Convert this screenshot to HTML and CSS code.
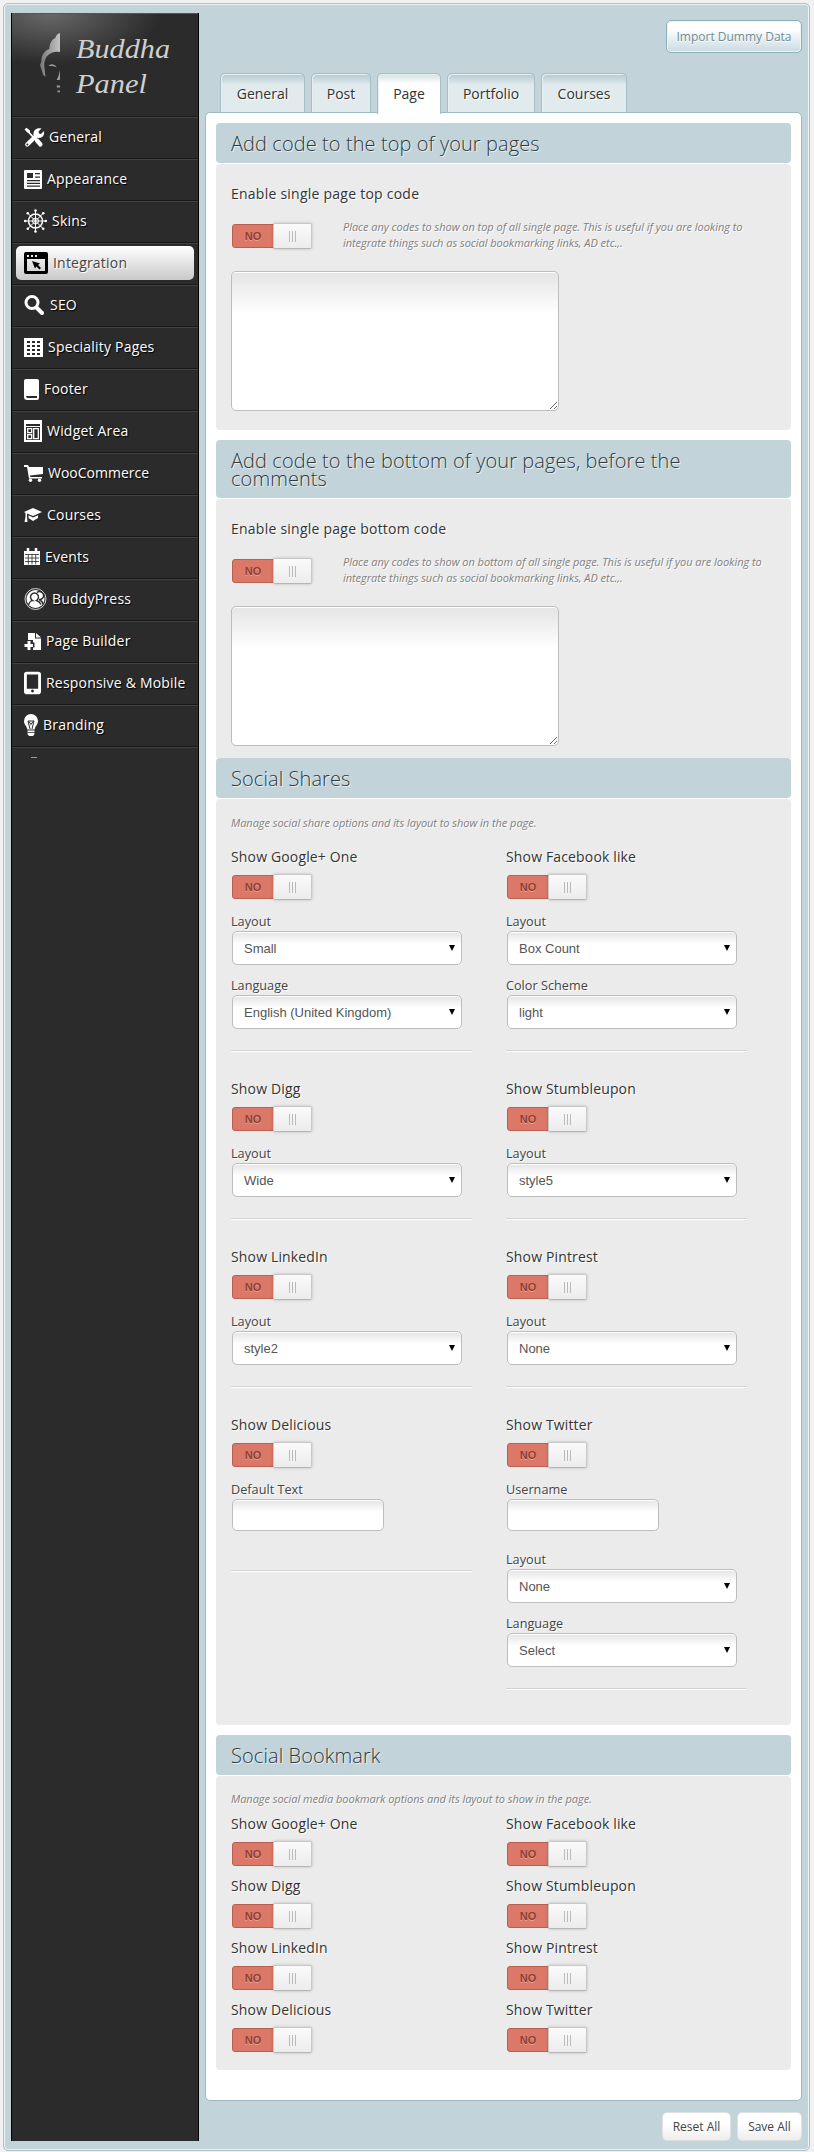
FILE: index.html
```html
<!DOCTYPE html>
<html lang="en">
<head>
<meta charset="utf-8">
<title>Buddha Panel</title>
<link rel="stylesheet" href="styles.css">
</head>
<body>
<div class="panel">
  <aside class="sidebar">
    <div class="logo">
      <svg width="186" height="103" viewBox="0 0 186 103">
        <defs><linearGradient id="metal" x1="0" y1="0" x2="1" y2="0"><stop offset="0" stop-color="#777"/><stop offset="1" stop-color="#c4c4c4"/></linearGradient></defs>
        <path fill="url(#metal)" d="M48 20v19c-6-1-10 1-13.300 4.500-2 3-2.700 6.500-2.400 10.200l1.200 10-2.200-1.700L28 52l1.300-3.500c.2-4 .5-6 2.500-8.500 2-2.200 3.500-3.500 5.500-4 0-5 2-9 6-11 .5-2.500 2-4 4.700-5z"/>
        <path fill="#999" d="M36.300 53c3-2.600 6-2.200 8.600 1.500-3-1.400-5.500-1.700-8.600-1.500zM48 57v10h-3.500c2-3 2.500-6 3.500-10zM44.500 72.500H48v2h-3zM45.500 77.500H48v1.700h-2.500z"/>
        <text x="64" y="45" textLength="94" lengthAdjust="spacingAndGlyphs">Buddha</text>
        <text x="64" y="80" textLength="71" lengthAdjust="spacingAndGlyphs">Panel</text>
      </svg>
    </div>
    <nav>
      <a class="item"><svg width="20" height="21" viewBox="0 0 20 21"><path class="ln" stroke-width="4.2" stroke-linecap="round" d="M3.2 17.600 11.500 9.500M13 13.500 16.500 17.500"/><path class="ln" stroke-width="1.800" d="M3 3.500 12 13"/><path class="f" d="M.5 2.500 2.500.8 6 3.500 6 5.500 4 6zM17.500 1.500 14.500 4.500 15 6.500 17 7 20 4c1 5-3 8-7.500 6.500L9.500 8C9 3.500 12.500 0 17.500 1.500z"/><circle cx="3.300" cy="17.500" r="1" fill="#2b2b2b"/></svg><span>General</span></a>
      <a class="item"><svg width="18" height="19" viewBox="0 0 18 19"><path class="f" fill-rule="evenodd" d="M1 0h16a1 1 0 0 1 1 1v17a1 1 0 0 1-1 1H1a1 1 0 0 1-1-1V1a1 1 0 0 1 1-1zM3 3v5h6V3zM11 3v1.300h5V3zM11 6.500v1.300h5V6.500zM3 10v1.300h13V10zM3 12.800v1.300h13v-1.300zM3 15.500v1.300h13v-1.300z"/></svg><span>Appearance</span></a>
      <a class="item"><svg width="23" height="24" viewBox="0 0 23 24"><g class="ln" stroke-width="1"><circle cx="11.500" cy="12" r="7" stroke-width="1.500"/><circle cx="11.500" cy="12" r="3"/><path d="M11.500 1v22M.5 12h22M3.800 4.300l15.400 15.400M19.200 4.300 3.800 19.700"/></g><g class="f"><circle cx="11.500" cy="1.500" r="1.300"/><circle cx="11.500" cy="22.500" r="1.300"/><circle cx="1.200" cy="12" r="1.300"/><circle cx="21.800" cy="12" r="1.300"/><circle cx="3.800" cy="4.300" r="1.300"/><circle cx="19.200" cy="19.700" r="1.300"/><circle cx="19.200" cy="4.300" r="1.300"/><circle cx="3.800" cy="19.700" r="1.300"/></g></svg><span>Skins</span></a>
      <a class="item active"><svg width="24" height="22" viewBox="0 0 24 22"><path fill="#000" fill-rule="evenodd" d="M2 0h20q2 0 2 2v18q0 2-2 2H2q-2 0-2-2V2Q0 0 2 0zM3 7v12h18V7zM3 3v2h2V3zM7 3v2h2V3zM11 3v2h2V3z"/><path d="m8 9 8 2.500-2 1.500 3 3-1.500 1.500-3-3L11 16.500z"/></svg><span>Integration</span></a>
      <a class="item"><svg width="21" height="21" viewBox="0 0 21 21"><circle class="ln" cx="8" cy="7.500" r="6" stroke-width="3"/><path class="ln" stroke-width="4" stroke-linecap="round" d="m13 13 5 5"/></svg><span>SEO</span></a>
      <a class="item tight"><svg width="19" height="19" viewBox="0 0 19 19"><path class="f" d="M0 0h19v19H0z"/><path stroke="#2b2b2b" stroke-width="2" stroke-dasharray="3 2" d="M3 4h13M3 8h13M3 12h13M3 16h13"/></svg><span>Speciality Pages</span></a>
      <a class="item"><svg width="15" height="21" viewBox="0 0 15 21"><path class="f" fill-rule="evenodd" d="M2 0h11q2 0 2 2v17q0 2-2 2H3q-3 0-3-3V2Q0 0 2 0zM2 17q0 2 2 2h9v-2z"/></svg><span>Footer</span></a>
      <a class="item"><svg width="18" height="22" viewBox="0 0 18 22"><path class="f" fill-rule="evenodd" d="M0 0h18v22H0zM2 4v2h14V4zM2 7v13h14V7z"/><path class="ln" stroke-width="1.300" d="M3.700 8.700h4v4h-4zM3.700 14.700h4v4h-4zM9.700 8.700h4.600v10H9.700z"/></svg><span>Widget Area</span></a>
      <a class="item"><svg width="19" height="17" viewBox="0 0 19 17"><path class="f" d="M0 0h4l1 2h14v7L6 10.500l.3 1.500H18v1.500H5L3 2H0z"/><circle class="f" cx="6.500" cy="15.200" r="1.700"/><circle class="f" cx="15.500" cy="15.200" r="1.700"/></svg><span class="plain">WooCommerce</span></a>
      <a class="item"><svg width="18" height="15" viewBox="0 0 18 15"><path class="f" d="M9 0 18 4 9 8 3 5.500V9l.5 5H.5L1.500 9V5L0 4zM4.500 7.200 9 9.500l5-2.300V10L9 13 4.500 10z"/></svg><span>Courses</span></a>
      <a class="item"><svg width="16" height="18" viewBox="0 0 16 18"><path class="f" d="M0 3h16v14H0z"/><path class="ln" d="M4 0v4M12 0v4" stroke-width="2.500"/><path stroke="#2b2b2b" stroke-width=".8" d="M1 6.500h14M1 10h14M1 13.500h14M4.300 6v10.500M8 6v10.500M11.700 6v10.500"/></svg><span>Events</span></a>
      <a class="item"><svg width="23" height="24" viewBox="0 0 23 24"><circle class="ln" cx="11.500" cy="12" r="10.500" stroke-width=".8"/><circle class="f" cx="11.500" cy="12" r="9"/><path class="f" stroke="#2b2b2b" stroke-width="1.400" d="M13 5.500a4 4 0 1 1 2 7M4.500 18.500c.5-3 2.500-5 4-5a4 4 0 1 1 4 0c2 .5 3.500 2 4.500 4M15.500 13c2 .5 3 2 3.500 4"/></svg><span>BuddyPress</span></a>
      <a class="item"><svg width="17" height="17" viewBox="0 0 17 17"><path class="f" d="M4 0h7v5.500h6V17H9v-2.500h1.500v-5H9V7H4zM12 0l5 4.500h-5zM3.500 8h3v3H9v3H6.500v3h-3v-3H.5v-3h3z"/></svg><span>Page Builder</span></a>
      <a class="item"><svg width="17" height="24" viewBox="0 0 18 24"><path class="f" fill-rule="evenodd" d="M3 0h12q3 0 3 3v18q0 3-3 3H3q-3 0-3-3V3q0-3 3-3zM3 3v15h12V3zM9 19a1.500 1.500 0 1 0 .01 0z"/></svg><span>Responsive &amp; Mobile</span></a>
      <a class="item"><svg width="14" height="22" viewBox="0 0 14 22"><path class="f" d="M7 0a7 7 0 0 1 7 7c0 4-3 5-3.300 8.500H3.300C3 12 0 11 0 7a7 7 0 0 1 7-7zM3.500 16.500h7V18h-7zM3.500 18.700h7V20L9 22H5l-1.500-2z"/><path fill="none" stroke="#2b2b2b" d="m6 15-2-8h6l-2 8M5 7.500l2 3 2-3"/></svg><span>Branding</span></a>
      <div class="sliver"><i></i></div>
    </nav>
  </aside>
  <main class="main">
    <div class="top"><button class="import">Import Dummy Data</button></div>
    <div class="tabs"><a class="t1">General</a><a class="t2">Post</a><a class="t3 on">Page</a><a class="t4">Portfolio</a><a class="t5">Courses</a></div>
    <div class="content">
      <h2>Add code to the top of your pages</h2>
      <section class="box code gap">
        <h3>Enable single page top code</h3>
        <div class="row"><div class="toggle"><b>NO</b><i></i></div><p class="note">Place any codes to show on top of all single page. This is useful if you are looking to<br>integrate things such as social bookmarking links, AD etc.,.</p></div>
        <textarea></textarea>
      </section>
      <h2>Add code to the bottom of your pages, before the<br>comments</h2>
      <section class="box code short">
        <h3>Enable single page bottom code</h3>
        <div class="row"><div class="toggle"><b>NO</b><i></i></div><p class="note">Place any codes to show on bottom of all single page. This is useful if you are looking to<br>integrate things such as social bookmarking links, AD etc.,.</p></div>
        <textarea></textarea>
      </section>
      <h2>Social Shares</h2>
      <section class="box shares gap">
        <p class="note">Manage social share options and its layout to show in the page.</p>
        <div class="grid">
          <div class="cell"><h3>Show Google+ One</h3><div class="toggle"><b>NO</b><i></i></div><label>Layout</label><div class="select">Small</div><label>Language</label><div class="select">English (United Kingdom)</div><hr></div>
          <div class="cell"><h3>Show Facebook like</h3><div class="toggle"><b>NO</b><i></i></div><label>Layout</label><div class="select">Box Count</div><label>Color Scheme</label><div class="select">light</div><hr></div>
          <div class="cell"><h3>Show Digg</h3><div class="toggle"><b>NO</b><i></i></div><label>Layout</label><div class="select">Wide</div><hr></div>
          <div class="cell"><h3>Show Stumbleupon</h3><div class="toggle"><b>NO</b><i></i></div><label>Layout</label><div class="select">style5</div><hr></div>
          <div class="cell"><h3>Show LinkedIn</h3><div class="toggle"><b>NO</b><i></i></div><label>Layout</label><div class="select">style2</div><hr></div>
          <div class="cell"><h3>Show Pintrest</h3><div class="toggle"><b>NO</b><i></i></div><label>Layout</label><div class="select">None</div><hr></div>
          <div class="cell"><h3>Show Delicious</h3><div class="toggle"><b>NO</b><i></i></div><label>Default Text</label><input type="text"><hr class="far"></div>
          <div class="cell"><h3>Show Twitter</h3><div class="toggle"><b>NO</b><i></i></div><label>Username</label><input type="text" class="wide-gap"><label>Layout</label><div class="select">None</div><label>Language</label><div class="select">Select</div><hr></div>
        </div>
      </section>
      <h2>Social Bookmark</h2>
      <section class="box marks">
        <p class="note">Manage social media bookmark options and its layout to show in the page.</p>
        <div class="grid">
          <div class="mark"><h3>Show Google+ One</h3><div class="toggle"><b>NO</b><i></i></div></div>
          <div class="mark"><h3>Show Facebook like</h3><div class="toggle"><b>NO</b><i></i></div></div>
          <div class="mark"><h3>Show Digg</h3><div class="toggle"><b>NO</b><i></i></div></div>
          <div class="mark"><h3>Show Stumbleupon</h3><div class="toggle"><b>NO</b><i></i></div></div>
          <div class="mark"><h3>Show LinkedIn</h3><div class="toggle"><b>NO</b><i></i></div></div>
          <div class="mark"><h3>Show Pintrest</h3><div class="toggle"><b>NO</b><i></i></div></div>
          <div class="mark"><h3>Show Delicious</h3><div class="toggle"><b>NO</b><i></i></div></div>
          <div class="mark"><h3>Show Twitter</h3><div class="toggle"><b>NO</b><i></i></div></div>
        </div>
      </section>
    </div>
    <div class="foot"><button class="reset">Reset All</button><button class="save">Save All</button></div>
  </main>
</div>
</body>
</html>
```
FILE: styles.css
```css
* { box-sizing: border-box; margin: 0; padding: 0; }
html { background: #f1f1f1; }
body { height: 2152px; padding: 3px 4px 1px 3px; font-family: "Open Sans", sans-serif; color: #333; overflow: hidden; }
.panel { display: flex; height: 2148px; padding: 9px 7px 9px 7px; background: #c2d4da; border: 1px solid #adc1c6; border-radius: 5px; box-shadow: inset 0 0 0 1px #eaf1f3; }

.sidebar { width: 188px; flex: none; background: #2b2b2b; border: solid #000; border-width: 0 1px; }
.logo { height: 104px; border-top: 1px solid #555; background: radial-gradient(ellipse 110px 50px at 38px 0, #686868, rgba(43,43,43,0)) #2b2b2b; border-bottom: 1px solid #1b1b1b; }
.logo svg { display: block; margin-top: -1px; }
.logo text { font: italic 28px "Liberation Serif", serif; fill: #cfcfcf; }
.item { display: flex; align-items: center; gap: 5px; height: 42px; padding: 0 0 2px 12px; border-top: 1px solid #414141; border-bottom: 1px solid #191919; font-size: 14px; letter-spacing: .2px; color: #fff; text-shadow: 1px 1px 1px #000; }
.item svg { flex: none; }
.item span { white-space: nowrap; padding-bottom: 2px; }
.item .plain { letter-spacing: 0; }
.f { fill: #fff; }
.ln { fill: none; stroke: #fff; }
.active { position: relative; z-index: 0; color: #444; text-shadow: 1px 1px 0 #fff; }
.active::before { content: ""; position: absolute; z-index: -1; inset: 2px 4px 4px; border-radius: 5px; background: linear-gradient(#fff, #c9c9c9); }
.sliver { border-top: 1px solid #414141; padding: 9px 0 0 19px; }
.sliver i { display: block; width: 6px; height: 1px; background: #999; }

.main { flex: 1; min-width: 0; padding-left: 6px; }
.top { height: 60px; padding-top: 7px; display: flex; justify-content: flex-end; }
button { font-family: inherit; }
.import { width: 136px; height: 33px; border: 1px solid #8fafba; border-radius: 5px; background: linear-gradient(#fff, #fff 25%, #c9dbe1); box-shadow: inset 0 0 0 1px #edf4f6; font-size: 12px; color: #6d8b95; text-shadow: 0 1px 0 #fff; white-space: nowrap; }
.tabs { display: flex; gap: 6px; height: 39px; padding-left: 15px; }
.tabs a { height: 39px; border: 1px solid #a6bec6; border-bottom: 0; border-radius: 5px 5px 0 0; background: linear-gradient(#b2c9d1, #e1eaec 28%, #e1eaec); box-shadow: inset 1px 1px 0 #e7eff1; font-size: 14px; line-height: 39px; text-align: center; text-shadow: 1px 1px 0 #fff; }
.t1 { width: 85px; } .t2 { width: 60px; } .t3 { width: 64px; } .t4 { width: 88px; } .t5 { width: 86px; }
.tabs .on { height: 41px; background: linear-gradient(#d0dfe4, #fff 24%); position: relative; z-index: 1; }
.content { height: 1989px; border: 1px solid #9db9c2; border-radius: 5px; background: #fff; padding: 10px 10px 0 10px; }

h2 { background: #c2d4da; border-radius: 4px; padding: 12px 15px 10px; font-size: 20px; line-height: 18px; font-weight: 350; letter-spacing: .08px; color: #30393c; text-shadow: 1px 1px 0 #e9f0f2; margin-bottom: 1px; white-space: nowrap; }
.box { background: #ebebeb; border-radius: 4px; padding: 0 15px; text-shadow: 1px 1px 0 #fff; }
.code { height: 266px; padding-top: 20px; }
.short { height: 259px; border-radius: 4px 4px 0 0; }
.gap { margin-bottom: 10px; }
h3 { font-size: 14px; line-height: 20px; font-weight: 400; letter-spacing: .15px; }
.code h3 { letter-spacing: .24px; }
.row { display: flex; height: 67px; padding-top: 19px; gap: 31px; }
.note { font-size: 11px; line-height: 16px; font-style: italic; letter-spacing: -.04px; color: #808080; white-space: nowrap; }
.row .note { margin-top: -4px; }
.toggle { display: flex; align-items: center; width: 81px; height: 26px; padding-left: 1px; flex: none; }
.toggle b { width: 42px; height: 24px; margin-right: -1px; border: 1px solid #b95e50; border-radius: 3px 0 0 3px; background: #dc7868; color: #8c4035; font: bold 11px/23px "Liberation Sans", sans-serif; text-align: center; text-shadow: 0 1px 0 #eaa195; }
.toggle i { width: 39px; height: 26px; border: 1px solid #c8c8c8; border-bottom-color: #b5b5b5; border-radius: 2px; background: linear-gradient(90deg, #bbb 1px, transparent 1px 3px, #bbb 3px 4px, transparent 4px 6px, #bbb 6px 7px) 50% 50% / 7px 11px no-repeat, linear-gradient(#fafafa, #ececec); box-shadow: 0 0 3px rgba(0,0,0,.22); }
textarea { display: block; width: 328px; height: 140px; border: 1px solid #bdbdbd; border-radius: 5px; background: linear-gradient(#e4e4e4, #fff 42px); box-shadow: inset 0 1px 0 #fff; }

.shares { height: 926px; padding-top: 16px; }
.grid { display: grid; grid-template-columns: 275px 275px; }
.shares .grid { padding-top: 16px; }
.cell { padding-bottom: 27px; }
.cell .toggle { margin: 7px 0 11px; }
label { display: block; height: 20px; font-size: 12.7px; line-height: 21px; color: #444; }
.select, input { display: block; margin: 0 0 10px 1px; border: 1px solid #bdbdbd; border-radius: 5px; background: linear-gradient(#e4e4e4, #fff 12px); box-shadow: inset 0 1px 0 #fff; }
.select { width: 230px; height: 34px; padding: 0 6px 0 11px; display: flex; align-items: center; justify-content: space-between; font: 13px "Liberation Sans", sans-serif; color: #555; text-shadow: none; }
.select::after { content: ""; border: solid transparent; border-width: 6px 3px 0; border-top-color: #000; margin-top: -1px; }
input { width: 152px; height: 32px; }
.wide-gap { margin-bottom: 18px; }
hr { width: 241px; height: 2px; border: 0; background: #d2d2d2; border-bottom: 1px solid #fff; margin-top: 21px; }
hr.far { margin-top: 39px; }
.marks { height: 294px; padding-top: 15px; }
.marks .grid { padding-top: 7px; }
.mark { height: 62px; }
.mark .toggle { margin-top: 7px; }

.foot { display: flex; justify-content: flex-end; gap: 6px; padding-top: 11px; }
.foot button { height: 29px; border: 1px solid #e0e0e0; border-radius: 5px; background: linear-gradient(#fff 40%, #ededed); font-size: 12px; color: #444; white-space: nowrap; }
.reset { width: 69px; } .save { width: 65px; }
```
